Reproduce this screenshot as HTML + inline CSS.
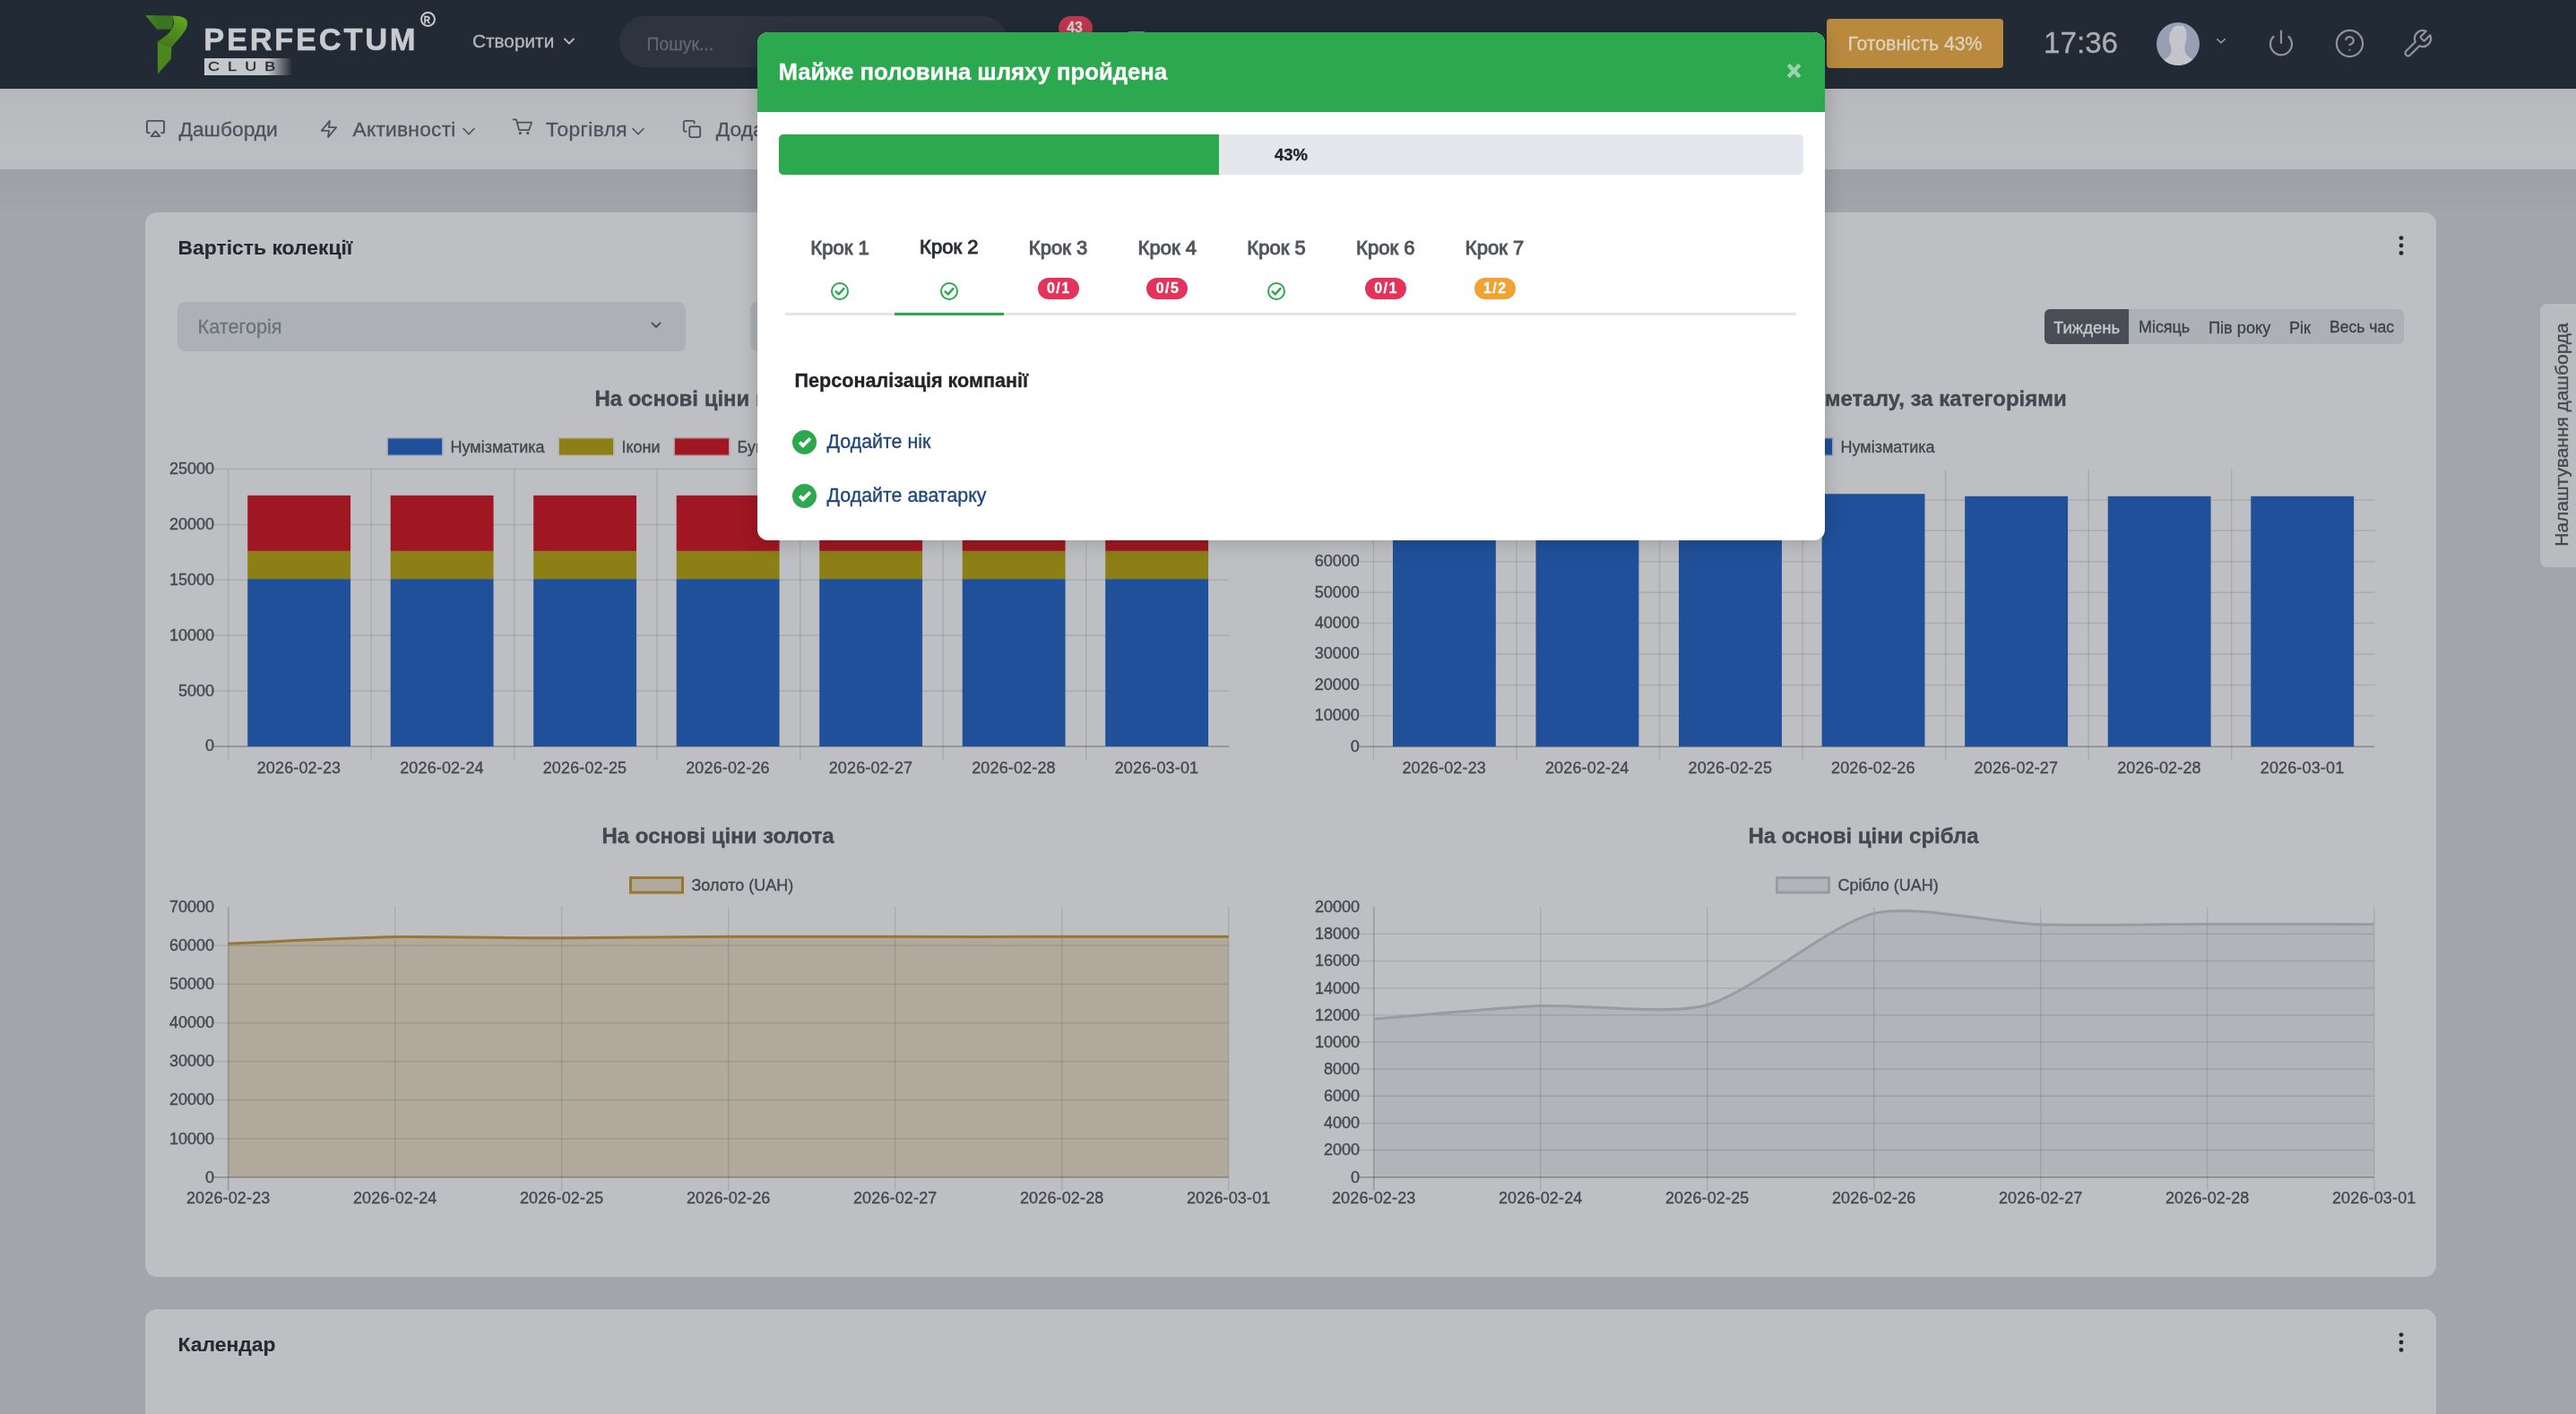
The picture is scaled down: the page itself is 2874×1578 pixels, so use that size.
<!DOCTYPE html>
<html lang="uk">
<head>
<meta charset="utf-8">
<title>Perfectum Club</title>
<style>
*{box-sizing:border-box;margin:0;padding:0}
html,body{width:2874px;height:1578px;overflow:hidden}
body{background:#a2a5aa;font-family:"Liberation Sans",sans-serif;position:relative;color:#44474e}
.abs{position:absolute}
.t{position:absolute;white-space:nowrap;line-height:1;-webkit-text-stroke-width:0.3px}
#header{position:absolute;left:0;top:0;width:2874px;height:99px;background:#222a35}
#nav{position:absolute;left:0;top:99px;width:2874px;height:90px;background:linear-gradient(to bottom,#b7b8bc 0,#bbbcc0 55%,#bcbdc1 100%)}
#navsh{position:absolute;left:0;top:189px;width:2874px;height:48px;background:linear-gradient(to bottom,rgba(0,0,0,0.028),rgba(0,0,0,0))}
.card{position:absolute;left:162px;width:2556px;background:#bebfc3;border-radius:13px}
#card1{top:237px;height:1188px}
#card2{top:1461px;height:200px}
.navt{font-size:22.8px;color:#4d525b}
.ctitle{font-size:22.9px;font-weight:bold;color:#25282d;-webkit-text-stroke-width:0.1px}
svg{position:absolute;overflow:visible}
svg text{font-family:"Liberation Sans",sans-serif;stroke:#44474e;stroke-width:0.35px}
</style>
</head>
<body>
<div id="root" style="position:absolute;left:0;top:0;width:2874px;height:1578px;will-change:transform">
<!-- HEADER -->
<div id="header">

<!-- logo -->
<svg width="80" height="99" viewBox="0 0 80 99" style="left:150px;top:0">
  <defs>
    <linearGradient id="lgA" x1="0" y1="0" x2="1" y2="0"><stop offset="0" stop-color="#4a8a1f"/><stop offset="0.45" stop-color="#3b741e"/><stop offset="1" stop-color="#3d7320"/></linearGradient>
    <linearGradient id="lgB" x1="0.7" y1="0" x2="0.3" y2="1"><stop offset="0" stop-color="#62a51d"/><stop offset="0.5" stop-color="#4e8c1c"/><stop offset="1" stop-color="#457a1e"/></linearGradient>
    <linearGradient id="lgC" x1="0" y1="0" x2="1" y2="1"><stop offset="0" stop-color="#4d8a1d"/><stop offset="1" stop-color="#4a831f"/></linearGradient>
  </defs>
  <path d="M12.1,17.0 L44.6,17.6 L41.4,32.8 L25.1,32.8 Z" fill="url(#lgA)"/>
  <path d="M42.3,18.0 C48.4,17.4 54.7,18.4 57.6,21.5 C60.2,24.7 59.2,30.5 56.0,34.9 C52.2,40.6 46.5,46.4 41.4,52.4 L25.8,46.7 C33.1,41.3 38.2,38.1 41.4,32.8 C43.9,28.6 45.5,22.8 42.3,18.0 Z" fill="url(#lgB)"/>
  <path d="M25.8,46.7 L41.4,52.4 L40.7,66.1 L26.0,82.5 Z" fill="url(#lgC)"/>
</svg>
<div class="t" style="left:227.3px;top:27.2px;font-size:34.5px;font-weight:bold;letter-spacing:2.7px;color:#c9cacd;-webkit-text-stroke:0.5px #c9cacd">PERFECTUM</div>
<div class="abs" style="left:468.5px;top:13.3px;width:17px;height:17px;border:2px solid #c9cacd;border-radius:50%"></div>
<div class="t" style="left:472.7px;top:17.5px;font-size:10px;font-weight:bold;color:#c9cacd">R</div>
<div class="abs" style="left:228px;top:65px;width:98px;height:19px;background:linear-gradient(90deg,#c6c7ca 0,#c6c7ca 72%,rgba(198,199,202,0) 100%)"></div>
<div class="t" style="left:231.5px;top:67.6px;font-size:13.8px;letter-spacing:7px;color:#262d38;transform:scaleX(1.3);transform-origin:0 0;-webkit-text-stroke:0.35px #262d38">CLUB</div>
<div class="t" style="left:527px;top:35.5px;font-size:20.8px;color:#b4b7bd">Створити</div>
<svg width="14" height="10" viewBox="0 0 14 10" style="left:628px;top:41px"><path d="M2,2.5 L7,7.5 L12,2.5" fill="none" stroke="#b4b7bd" stroke-width="2" stroke-linecap="round" stroke-linejoin="round"/></svg>
<div class="abs" style="left:691px;top:18px;width:433px;height:57px;border-radius:29px;background:#2d3440"></div>
<div class="t" style="left:721.5px;top:39.5px;font-size:19.4px;color:#606873">Пошук...</div>
<div class="abs" style="left:1181px;top:17.8px;width:38px;height:27px;border-radius:13.5px;background:#bf3850"></div>
<div class="abs" style="left:1259px;top:34.6px;width:18px;height:2px;border-radius:1px;background:#7d838d"></div>
<div class="t" style="left:1190.3px;top:22.6px;font-size:15.8px;font-weight:bold;color:#dcd0d3">43</div>
<div class="abs" style="left:2038px;top:21px;width:197px;height:55px;border-radius:4px;background:#b98a3e"></div>
<div class="t" style="left:2061.5px;top:38px;font-size:21.2px;color:#ded3c0">Готовність 43%</div>
<div class="t" style="left:2280px;top:30.5px;font-size:33.2px;color:#a9adb4">17:36</div>
<!-- avatar -->
<svg width="48" height="48" viewBox="0 0 48 48" style="left:2406px;top:25px">
  <defs><clipPath id="avc"><circle cx="24" cy="24" r="24"/></clipPath></defs>
  <circle cx="24" cy="24" r="24" fill="#979fb5"/>
  <g clip-path="url(#avc)">
    <path d="M17,9 C18,5 22,3.2 26.5,4 L28.5,3 C32.5,5.5 34,10 33.5,16 C33.6,19.5 33,22 31.8,24 C31.5,27 31.3,29 31.6,31 C32,34 33.5,36.5 36,38.5 C38.5,40.5 41,41.5 43,44 L46,50 L2,50 L5,45 C7.5,42.5 10.5,40.5 13,38.5 C15.5,36.5 16.6,33 16.5,30.5 C16.4,28 15.8,26 15.3,24 C14.2,22 13.8,19 14.2,16.5 C14,13.5 15,11 17,9 Z" fill="#c4c5ca"/>
  </g>
</svg>
<svg width="14" height="10" viewBox="0 0 14 10" style="left:2470.8px;top:41.3px"><path d="M2.8,2.7 L7,6.8 L11.2,2.7" fill="none" stroke="#9a9fa8" stroke-width="1.6" stroke-linecap="round" stroke-linejoin="round"/></svg>
<!-- power -->
<svg width="32" height="32" viewBox="0 0 24 24" style="left:2529px;top:32.4px" fill="none" stroke="#8d939d" stroke-width="1.65" stroke-linecap="round" stroke-linejoin="round"><path d="M18.36 6.64a9 9 0 1 1-12.73 0"/><line x1="12" y1="2" x2="12" y2="12"/></svg>
<!-- help -->
<svg width="35" height="35" viewBox="0 0 24 24" style="left:2603.6px;top:30.8px" fill="none" stroke="#8d939d" stroke-width="1.5" stroke-linecap="round" stroke-linejoin="round"><circle cx="12" cy="12" r="10"/><path d="M9.09 9a3 3 0 0 1 5.83 1c0 2-3 3-3 3"/><line x1="12" y1="17" x2="12.01" y2="17"/></svg>
<!-- wrench -->
<svg width="36" height="36" viewBox="0 0 24 24" style="left:2678.7px;top:31px" fill="none" stroke="#8d939d" stroke-width="1.5" stroke-linecap="round" stroke-linejoin="round"><path d="M14.7 6.3a1 1 0 0 0 0 1.4l1.6 1.6a1 1 0 0 0 1.4 0l3.77-3.77a6 6 0 0 1-7.94 7.94l-6.91 6.91a2.12 2.12 0 0 1-3-3l6.91-6.91a6 6 0 0 1 7.94-7.94l-3.76 3.76z"/></svg>

</div>
<!-- NAV -->
<div id="nav">

<svg width="23" height="23" viewBox="0 0 24 24" style="left:161.5px;top:32.7px" fill="none" stroke="#4d525b" stroke-width="2" stroke-linecap="round" stroke-linejoin="round"><path d="M5 17H4a2 2 0 0 1-2-2V5a2 2 0 0 1 2-2h16a2 2 0 0 1 2 2v10a2 2 0 0 1-2 2h-1"/><polygon points="12 15 17 21 7 21 12 15"/></svg>
<div class="t navt" style="left:199.5px;top:34.1px">Дашборди</div>
<svg width="22" height="22" viewBox="0 0 24 24" style="left:356px;top:33.7px" fill="none" stroke="#4d525b" stroke-width="2" stroke-linecap="round" stroke-linejoin="round"><polygon points="13 2 3 14 12 14 11 22 21 10 12 10 13 2"/></svg>
<div class="t navt" style="left:393.5px;top:34.1px;letter-spacing:0.22px">Активності</div>
<svg width="16" height="10" viewBox="0 0 16 10" style="left:514.5px;top:42.7px"><path d="M2,1.5 L8,7.8 L14,1.5" fill="none" stroke="#4d525b" stroke-width="1.6" stroke-linecap="round" stroke-linejoin="round"/></svg>
<svg width="24" height="22" viewBox="0 0 24 22" style="left:571px;top:31.7px" fill="none" stroke="#4d525b" stroke-width="1.7" stroke-linecap="round" stroke-linejoin="round"><path d="M1.5 2.3h3.4l3.3 11.9h10.9l3-8.6H6.4"/><circle cx="9.4" cy="17.6" r="0.8" fill="#4d525b"/><circle cx="17.8" cy="17.6" r="0.8" fill="#4d525b"/></svg>
<div class="t navt" style="left:609px;top:34.1px;letter-spacing:0.37px">Торгівля</div>
<svg width="16" height="10" viewBox="0 0 16 10" style="left:703.5px;top:42.7px"><path d="M2,1.5 L8,7.8 L14,1.5" fill="none" stroke="#4d525b" stroke-width="1.6" stroke-linecap="round" stroke-linejoin="round"/></svg>
<svg width="22" height="22" viewBox="0 0 24 24" style="left:761px;top:34.2px" fill="none" stroke="#4d525b" stroke-width="2" stroke-linecap="round" stroke-linejoin="round"><rect x="9" y="9" width="13" height="13" rx="2" ry="2"/><path d="M5 15H4a2 2 0 0 1-2-2V4a2 2 0 0 1 2-2h9a2 2 0 0 1 2 2v1"/></svg>
<div class="t navt" style="left:798.8px;top:34.1px">Додатки</div>

</div>
<div id="navsh"></div>
<!-- CARDS -->
<div class="card" id="card1"></div>
<div class="card" id="card2"></div>

<div class="t ctitle" style="left:198.5px;top:265px">Вартість колекції</div>
<div class="t ctitle" style="left:198.5px;top:1488.7px">Календар</div>
<svg width="8" height="24" viewBox="0 0 8 24" style="left:2674.5px;top:261.5px"><circle cx="4" cy="3.6" r="2.45" fill="#25282d"/><circle cx="4" cy="12" r="2.45" fill="#25282d"/><circle cx="4" cy="20.4" r="2.45" fill="#25282d"/></svg>
<svg width="8" height="24" viewBox="0 0 8 24" style="left:2674.5px;top:1485.5px"><circle cx="4" cy="3.6" r="2.45" fill="#25282d"/><circle cx="4" cy="12" r="2.45" fill="#25282d"/><circle cx="4" cy="20.4" r="2.45" fill="#25282d"/></svg>
<div class="abs" style="left:198px;top:337px;width:567px;height:55px;border-radius:8px;background:#adb1b6"></div>
<div class="t" style="left:220.5px;top:353.5px;font-size:21.7px;color:#6d7279">Категорія</div>
<svg width="14" height="10" viewBox="0 0 14 10" style="left:724.5px;top:358px"><path d="M2.5,2.5 L7,7 L11.5,2.5" fill="none" stroke="#4d525b" stroke-width="2" stroke-linecap="round" stroke-linejoin="round"/></svg>
<div class="abs" style="left:837px;top:337px;width:567px;height:55px;border-radius:8px;background:#adb1b6"></div>
<div class="abs" style="left:2281px;top:345px;width:401px;height:39px;border-radius:6px;background:#adb1b6"></div>
<div class="abs" style="left:2281px;top:345px;width:94px;height:39px;border-radius:6px 0 0 6px;background:#484d56"></div>
<div class="t" style="left:2291px;top:357px;font-size:18.5px;color:#c6c9ce">Тиждень</div>
<div class="t" style="left:2386px;top:357px;font-size:17.9px;color:#3b3f47">Місяць</div>
<div class="t" style="left:2464px;top:357px;font-size:18.2px;color:#3b3f47">Пів року</div>
<div class="t" style="left:2554px;top:357px;font-size:18.1px;color:#3b3f47">Рік</div>
<div class="t" style="left:2599px;top:357px;font-size:17.6px;color:#3b3f47">Весь час</div>

<svg id="charts" width="2874" height="1578" viewBox="0 0 2874 1578" style="left:0;top:0">
<text x="663.40" y="453.00" font-size="24" text-anchor="start" font-weight="bold" fill="#44474e">На основі ціни металу</text>
<rect x="433.00" y="489.50" width="60" height="18" fill="#205099" stroke="#205099" stroke-opacity="0.22" stroke-width="3"/>
<text x="502.50" y="505.00" font-size="18" text-anchor="start" font-weight="normal" fill="#44474e">Нумізматика</text>
<rect x="624.00" y="489.50" width="60" height="18" fill="#8b7f16" stroke="#8b7f16" stroke-opacity="0.22" stroke-width="3"/>
<text x="693.50" y="505.00" font-size="18" text-anchor="start" font-weight="normal" fill="#44474e">Ікони</text>
<rect x="753.00" y="489.50" width="60" height="18" fill="#a01623" stroke="#a01623" stroke-opacity="0.22" stroke-width="3"/>
<text x="822.50" y="505.00" font-size="18" text-anchor="start" font-weight="normal" fill="#44474e">Букіністика</text>
<line x1="238.20" y1="833.00" x2="1371.20" y2="833.00" stroke="rgba(0,0,0,0.28)" stroke-width="1.5"/>
<text x="239.10" y="838.40" font-size="18" text-anchor="end" font-weight="normal" fill="#44474e">0</text>
<line x1="238.20" y1="771.10" x2="1371.20" y2="771.10" stroke="rgba(0,0,0,0.10)" stroke-width="1.5"/>
<text x="239.10" y="776.50" font-size="18" text-anchor="end" font-weight="normal" fill="#44474e">5000</text>
<line x1="238.20" y1="709.20" x2="1371.20" y2="709.20" stroke="rgba(0,0,0,0.10)" stroke-width="1.5"/>
<text x="239.10" y="714.60" font-size="18" text-anchor="end" font-weight="normal" fill="#44474e">10000</text>
<line x1="238.20" y1="647.30" x2="1371.20" y2="647.30" stroke="rgba(0,0,0,0.10)" stroke-width="1.5"/>
<text x="239.10" y="652.70" font-size="18" text-anchor="end" font-weight="normal" fill="#44474e">15000</text>
<line x1="238.20" y1="585.40" x2="1371.20" y2="585.40" stroke="rgba(0,0,0,0.10)" stroke-width="1.5"/>
<text x="239.10" y="590.80" font-size="18" text-anchor="end" font-weight="normal" fill="#44474e">20000</text>
<line x1="238.20" y1="523.50" x2="1371.20" y2="523.50" stroke="rgba(0,0,0,0.10)" stroke-width="1.5"/>
<text x="239.10" y="528.90" font-size="18" text-anchor="end" font-weight="normal" fill="#44474e">25000</text>
<line x1="254.70" y1="523.50" x2="254.70" y2="848.00" stroke="rgba(0,0,0,0.10)" stroke-width="1.5"/>
<line x1="414.20" y1="523.50" x2="414.20" y2="848.00" stroke="rgba(0,0,0,0.10)" stroke-width="1.5"/>
<line x1="573.70" y1="523.50" x2="573.70" y2="848.00" stroke="rgba(0,0,0,0.10)" stroke-width="1.5"/>
<line x1="733.20" y1="523.50" x2="733.20" y2="848.00" stroke="rgba(0,0,0,0.10)" stroke-width="1.5"/>
<line x1="892.70" y1="523.50" x2="892.70" y2="848.00" stroke="rgba(0,0,0,0.10)" stroke-width="1.5"/>
<line x1="1052.20" y1="523.50" x2="1052.20" y2="848.00" stroke="rgba(0,0,0,0.10)" stroke-width="1.5"/>
<line x1="1211.70" y1="523.50" x2="1211.70" y2="848.00" stroke="rgba(0,0,0,0.10)" stroke-width="1.5"/>
<rect x="276.23" y="646.10" width="114.84" height="186.90" fill="#205099" />
<rect x="276.23" y="614.90" width="114.84" height="31.20" fill="#8b7f16" />
<rect x="276.23" y="552.90" width="114.84" height="62.00" fill="#a01623" />
<text x="333.45" y="862.50" font-size="18" text-anchor="middle" font-weight="normal" fill="#44474e" letter-spacing="0.15">2026-02-23</text>
<rect x="435.73" y="646.10" width="114.84" height="186.90" fill="#205099" />
<rect x="435.73" y="614.90" width="114.84" height="31.20" fill="#8b7f16" />
<rect x="435.73" y="552.90" width="114.84" height="62.00" fill="#a01623" />
<text x="492.95" y="862.50" font-size="18" text-anchor="middle" font-weight="normal" fill="#44474e" letter-spacing="0.15">2026-02-24</text>
<rect x="595.23" y="646.10" width="114.84" height="186.90" fill="#205099" />
<rect x="595.23" y="614.90" width="114.84" height="31.20" fill="#8b7f16" />
<rect x="595.23" y="552.90" width="114.84" height="62.00" fill="#a01623" />
<text x="652.45" y="862.50" font-size="18" text-anchor="middle" font-weight="normal" fill="#44474e" letter-spacing="0.15">2026-02-25</text>
<rect x="754.73" y="646.10" width="114.84" height="186.90" fill="#205099" />
<rect x="754.73" y="614.90" width="114.84" height="31.20" fill="#8b7f16" />
<rect x="754.73" y="552.90" width="114.84" height="62.00" fill="#a01623" />
<text x="811.95" y="862.50" font-size="18" text-anchor="middle" font-weight="normal" fill="#44474e" letter-spacing="0.15">2026-02-26</text>
<rect x="914.23" y="646.10" width="114.84" height="186.90" fill="#205099" />
<rect x="914.23" y="614.90" width="114.84" height="31.20" fill="#8b7f16" />
<rect x="914.23" y="552.90" width="114.84" height="62.00" fill="#a01623" />
<text x="971.45" y="862.50" font-size="18" text-anchor="middle" font-weight="normal" fill="#44474e" letter-spacing="0.15">2026-02-27</text>
<rect x="1073.73" y="646.10" width="114.84" height="186.90" fill="#205099" />
<rect x="1073.73" y="614.90" width="114.84" height="31.20" fill="#8b7f16" />
<rect x="1073.73" y="552.90" width="114.84" height="62.00" fill="#a01623" />
<text x="1130.95" y="862.50" font-size="18" text-anchor="middle" font-weight="normal" fill="#44474e" letter-spacing="0.15">2026-02-28</text>
<rect x="1233.23" y="646.10" width="114.84" height="186.90" fill="#205099" />
<rect x="1233.23" y="614.90" width="114.84" height="31.20" fill="#8b7f16" />
<rect x="1233.23" y="552.90" width="114.84" height="62.00" fill="#a01623" />
<text x="1290.45" y="862.50" font-size="18" text-anchor="middle" font-weight="normal" fill="#44474e" letter-spacing="0.15">2026-03-01</text>
<text x="2305.80" y="453.00" font-size="24" text-anchor="end" font-weight="bold" fill="#44474e">На основі ціни металу, за категоріями</text>
<rect x="1984.00" y="489.50" width="60" height="18" fill="#205099" stroke="#205099" stroke-opacity="0.22" stroke-width="3"/>
<text x="2053.50" y="505.00" font-size="18" text-anchor="start" font-weight="normal" fill="#44474e">Нумізматика</text>
<line x1="1515.90" y1="833.20" x2="2649.30" y2="833.20" stroke="rgba(0,0,0,0.28)" stroke-width="1.5"/>
<text x="1516.80" y="838.60" font-size="18" text-anchor="end" font-weight="normal" fill="#44474e">0</text>
<line x1="1515.90" y1="798.79" x2="2649.30" y2="798.79" stroke="rgba(0,0,0,0.10)" stroke-width="1.5"/>
<text x="1516.80" y="804.19" font-size="18" text-anchor="end" font-weight="normal" fill="#44474e">10000</text>
<line x1="1515.90" y1="764.38" x2="2649.30" y2="764.38" stroke="rgba(0,0,0,0.10)" stroke-width="1.5"/>
<text x="1516.80" y="769.78" font-size="18" text-anchor="end" font-weight="normal" fill="#44474e">20000</text>
<line x1="1515.90" y1="729.97" x2="2649.30" y2="729.97" stroke="rgba(0,0,0,0.10)" stroke-width="1.5"/>
<text x="1516.80" y="735.37" font-size="18" text-anchor="end" font-weight="normal" fill="#44474e">30000</text>
<line x1="1515.90" y1="695.56" x2="2649.30" y2="695.56" stroke="rgba(0,0,0,0.10)" stroke-width="1.5"/>
<text x="1516.80" y="700.96" font-size="18" text-anchor="end" font-weight="normal" fill="#44474e">40000</text>
<line x1="1515.90" y1="661.14" x2="2649.30" y2="661.14" stroke="rgba(0,0,0,0.10)" stroke-width="1.5"/>
<text x="1516.80" y="666.54" font-size="18" text-anchor="end" font-weight="normal" fill="#44474e">50000</text>
<line x1="1515.90" y1="626.73" x2="2649.30" y2="626.73" stroke="rgba(0,0,0,0.10)" stroke-width="1.5"/>
<text x="1516.80" y="632.13" font-size="18" text-anchor="end" font-weight="normal" fill="#44474e">60000</text>
<line x1="1515.90" y1="592.32" x2="2649.30" y2="592.32" stroke="rgba(0,0,0,0.10)" stroke-width="1.5"/>
<text x="1516.80" y="597.72" font-size="18" text-anchor="end" font-weight="normal" fill="#44474e">70000</text>
<line x1="1515.90" y1="557.91" x2="2649.30" y2="557.91" stroke="rgba(0,0,0,0.10)" stroke-width="1.5"/>
<text x="1516.80" y="563.31" font-size="18" text-anchor="end" font-weight="normal" fill="#44474e">80000</text>
<text x="1516.80" y="528.90" font-size="18" text-anchor="end" font-weight="normal" fill="#44474e">90000</text>
<line x1="1532.40" y1="523.50" x2="1532.40" y2="848.20" stroke="rgba(0,0,0,0.10)" stroke-width="1.5"/>
<line x1="1691.96" y1="523.50" x2="1691.96" y2="848.20" stroke="rgba(0,0,0,0.10)" stroke-width="1.5"/>
<line x1="1851.51" y1="523.50" x2="1851.51" y2="848.20" stroke="rgba(0,0,0,0.10)" stroke-width="1.5"/>
<line x1="2011.07" y1="523.50" x2="2011.07" y2="848.20" stroke="rgba(0,0,0,0.10)" stroke-width="1.5"/>
<line x1="2170.63" y1="523.50" x2="2170.63" y2="848.20" stroke="rgba(0,0,0,0.10)" stroke-width="1.5"/>
<line x1="2330.19" y1="523.50" x2="2330.19" y2="848.20" stroke="rgba(0,0,0,0.10)" stroke-width="1.5"/>
<line x1="2489.74" y1="523.50" x2="2489.74" y2="848.20" stroke="rgba(0,0,0,0.10)" stroke-width="1.5"/>
<rect x="1553.94" y="553.44" width="114.88" height="279.76" fill="#205099" />
<text x="1611.18" y="862.70" font-size="18" text-anchor="middle" font-weight="normal" fill="#44474e" letter-spacing="0.15">2026-02-23</text>
<rect x="1713.50" y="553.44" width="114.88" height="279.76" fill="#205099" />
<text x="1770.74" y="862.70" font-size="18" text-anchor="middle" font-weight="normal" fill="#44474e" letter-spacing="0.15">2026-02-24</text>
<rect x="1873.05" y="553.44" width="114.88" height="279.76" fill="#205099" />
<text x="1930.29" y="862.70" font-size="18" text-anchor="middle" font-weight="normal" fill="#44474e" letter-spacing="0.15">2026-02-25</text>
<rect x="2032.61" y="551.20" width="114.88" height="282.00" fill="#205099" />
<text x="2089.85" y="862.70" font-size="18" text-anchor="middle" font-weight="normal" fill="#44474e" letter-spacing="0.15">2026-02-26</text>
<rect x="2192.17" y="553.78" width="114.88" height="279.42" fill="#205099" />
<text x="2249.41" y="862.70" font-size="18" text-anchor="middle" font-weight="normal" fill="#44474e" letter-spacing="0.15">2026-02-27</text>
<rect x="2351.72" y="553.78" width="114.88" height="279.42" fill="#205099" />
<text x="2408.96" y="862.70" font-size="18" text-anchor="middle" font-weight="normal" fill="#44474e" letter-spacing="0.15">2026-02-28</text>
<rect x="2511.28" y="553.78" width="114.88" height="279.42" fill="#205099" />
<text x="2568.52" y="862.70" font-size="18" text-anchor="middle" font-weight="normal" fill="#44474e" letter-spacing="0.15">2026-03-01</text>
<text x="801.00" y="941.40" font-size="24" text-anchor="middle" font-weight="bold" fill="#44474e">На основі ціни золота</text>
<rect x="703.50" y="979.50" width="58" height="16.5" fill="#b1aa9c" stroke="#977732" stroke-width="3"/>
<text x="771.50" y="994.00" font-size="18" text-anchor="start" font-weight="normal" fill="#44474e">Золото (UAH)</text>
<path d="M254.70,1052.93 C301.20,1051.08 394.18,1046.29 440.70,1045.53 C487.18,1044.77 580.20,1046.92 626.70,1046.87 C673.20,1046.83 766.20,1045.34 812.70,1045.15 C859.20,1044.96 952.20,1045.34 998.70,1045.37 C1045.20,1045.39 1138.20,1045.37 1184.70,1045.37 C1231.20,1045.37 1324.20,1045.37 1370.70,1045.37 L1370.70,1313.70 L254.70,1313.70 Z" fill="#b1aa9c"/>
<line x1="238.20" y1="1313.70" x2="1370.70" y2="1313.70" stroke="rgba(0,0,0,0.28)" stroke-width="1.5"/>
<text x="239.10" y="1319.60" font-size="18" text-anchor="end" font-weight="normal" fill="#44474e">0</text>
<line x1="238.20" y1="1270.63" x2="1370.70" y2="1270.63" stroke="rgba(0,0,0,0.10)" stroke-width="1.5"/>
<text x="239.10" y="1276.53" font-size="18" text-anchor="end" font-weight="normal" fill="#44474e">10000</text>
<line x1="238.20" y1="1227.56" x2="1370.70" y2="1227.56" stroke="rgba(0,0,0,0.10)" stroke-width="1.5"/>
<text x="239.10" y="1233.46" font-size="18" text-anchor="end" font-weight="normal" fill="#44474e">20000</text>
<line x1="238.20" y1="1184.49" x2="1370.70" y2="1184.49" stroke="rgba(0,0,0,0.10)" stroke-width="1.5"/>
<text x="239.10" y="1190.39" font-size="18" text-anchor="end" font-weight="normal" fill="#44474e">30000</text>
<line x1="238.20" y1="1141.41" x2="1370.70" y2="1141.41" stroke="rgba(0,0,0,0.10)" stroke-width="1.5"/>
<text x="239.10" y="1147.31" font-size="18" text-anchor="end" font-weight="normal" fill="#44474e">40000</text>
<line x1="238.20" y1="1098.34" x2="1370.70" y2="1098.34" stroke="rgba(0,0,0,0.10)" stroke-width="1.5"/>
<text x="239.10" y="1104.24" font-size="18" text-anchor="end" font-weight="normal" fill="#44474e">50000</text>
<line x1="238.20" y1="1055.27" x2="1370.70" y2="1055.27" stroke="rgba(0,0,0,0.10)" stroke-width="1.5"/>
<text x="239.10" y="1061.17" font-size="18" text-anchor="end" font-weight="normal" fill="#44474e">60000</text>
<text x="239.10" y="1018.10" font-size="18" text-anchor="end" font-weight="normal" fill="#44474e">70000</text>
<line x1="254.70" y1="1012.20" x2="254.70" y2="1328.70" stroke="rgba(0,0,0,0.2)" stroke-width="1.5"/>
<line x1="440.70" y1="1012.20" x2="440.70" y2="1328.70" stroke="rgba(0,0,0,0.10)" stroke-width="1.5"/>
<line x1="626.70" y1="1012.20" x2="626.70" y2="1328.70" stroke="rgba(0,0,0,0.10)" stroke-width="1.5"/>
<line x1="812.70" y1="1012.20" x2="812.70" y2="1328.70" stroke="rgba(0,0,0,0.10)" stroke-width="1.5"/>
<line x1="998.70" y1="1012.20" x2="998.70" y2="1328.70" stroke="rgba(0,0,0,0.10)" stroke-width="1.5"/>
<line x1="1184.70" y1="1012.20" x2="1184.70" y2="1328.70" stroke="rgba(0,0,0,0.10)" stroke-width="1.5"/>
<line x1="1370.70" y1="1012.20" x2="1370.70" y2="1328.70" stroke="rgba(0,0,0,0.10)" stroke-width="1.5"/>
<path d="M254.70,1052.93 C301.20,1051.08 394.18,1046.29 440.70,1045.53 C487.18,1044.77 580.20,1046.92 626.70,1046.87 C673.20,1046.83 766.20,1045.34 812.70,1045.15 C859.20,1044.96 952.20,1045.34 998.70,1045.37 C1045.20,1045.39 1138.20,1045.37 1184.70,1045.37 C1231.20,1045.37 1324.20,1045.37 1370.70,1045.37" fill="none" stroke="#977732" stroke-width="3" stroke-linejoin="round"/>
<text x="254.70" y="1343.20" font-size="18" text-anchor="middle" font-weight="normal" fill="#44474e" letter-spacing="0.15">2026-02-23</text>
<text x="440.70" y="1343.20" font-size="18" text-anchor="middle" font-weight="normal" fill="#44474e" letter-spacing="0.15">2026-02-24</text>
<text x="626.70" y="1343.20" font-size="18" text-anchor="middle" font-weight="normal" fill="#44474e" letter-spacing="0.15">2026-02-25</text>
<text x="812.70" y="1343.20" font-size="18" text-anchor="middle" font-weight="normal" fill="#44474e" letter-spacing="0.15">2026-02-26</text>
<text x="998.70" y="1343.20" font-size="18" text-anchor="middle" font-weight="normal" fill="#44474e" letter-spacing="0.15">2026-02-27</text>
<text x="1184.70" y="1343.20" font-size="18" text-anchor="middle" font-weight="normal" fill="#44474e" letter-spacing="0.15">2026-02-28</text>
<text x="1370.70" y="1343.20" font-size="18" text-anchor="middle" font-weight="normal" fill="#44474e" letter-spacing="0.15">2026-03-01</text>
<text x="2079.00" y="941.40" font-size="24" text-anchor="middle" font-weight="bold" fill="#44474e">На основі ціни срібла</text>
<rect x="1982.50" y="979.50" width="58" height="16.5" fill="#b2b4b9" stroke="#989ba1" stroke-width="3"/>
<text x="2050.50" y="994.00" font-size="18" text-anchor="start" font-weight="normal" fill="#44474e">Срібло (UAH)</text>
<path d="M1532.70,1137.14 C1579.20,1133.49 1672.13,1124.51 1718.70,1122.55 C1765.13,1120.60 1861.26,1133.54 1904.70,1121.49 C1954.26,1107.75 2041.19,1031.30 2090.70,1019.36 C2134.19,1008.87 2230.15,1030.32 2276.70,1031.80 C2323.15,1033.28 2416.20,1031.23 2462.70,1031.19 C2509.20,1031.16 2602.20,1031.42 2648.70,1031.50 L2648.70,1313.70 L1532.70,1313.70 Z" fill="#b2b4b9"/>
<line x1="1516.20" y1="1313.70" x2="2648.70" y2="1313.70" stroke="rgba(0,0,0,0.28)" stroke-width="1.5"/>
<text x="1517.10" y="1319.60" font-size="18" text-anchor="end" font-weight="normal" fill="#44474e">0</text>
<line x1="1516.20" y1="1283.55" x2="2648.70" y2="1283.55" stroke="rgba(0,0,0,0.10)" stroke-width="1.5"/>
<text x="1517.10" y="1289.45" font-size="18" text-anchor="end" font-weight="normal" fill="#44474e">2000</text>
<line x1="1516.20" y1="1253.40" x2="2648.70" y2="1253.40" stroke="rgba(0,0,0,0.10)" stroke-width="1.5"/>
<text x="1517.10" y="1259.30" font-size="18" text-anchor="end" font-weight="normal" fill="#44474e">4000</text>
<line x1="1516.20" y1="1223.25" x2="2648.70" y2="1223.25" stroke="rgba(0,0,0,0.10)" stroke-width="1.5"/>
<text x="1517.10" y="1229.15" font-size="18" text-anchor="end" font-weight="normal" fill="#44474e">6000</text>
<line x1="1516.20" y1="1193.10" x2="2648.70" y2="1193.10" stroke="rgba(0,0,0,0.10)" stroke-width="1.5"/>
<text x="1517.10" y="1199.00" font-size="18" text-anchor="end" font-weight="normal" fill="#44474e">8000</text>
<line x1="1516.20" y1="1162.95" x2="2648.70" y2="1162.95" stroke="rgba(0,0,0,0.10)" stroke-width="1.5"/>
<text x="1517.10" y="1168.85" font-size="18" text-anchor="end" font-weight="normal" fill="#44474e">10000</text>
<line x1="1516.20" y1="1132.80" x2="2648.70" y2="1132.80" stroke="rgba(0,0,0,0.10)" stroke-width="1.5"/>
<text x="1517.10" y="1138.70" font-size="18" text-anchor="end" font-weight="normal" fill="#44474e">12000</text>
<line x1="1516.20" y1="1102.65" x2="2648.70" y2="1102.65" stroke="rgba(0,0,0,0.10)" stroke-width="1.5"/>
<text x="1517.10" y="1108.55" font-size="18" text-anchor="end" font-weight="normal" fill="#44474e">14000</text>
<line x1="1516.20" y1="1072.50" x2="2648.70" y2="1072.50" stroke="rgba(0,0,0,0.10)" stroke-width="1.5"/>
<text x="1517.10" y="1078.40" font-size="18" text-anchor="end" font-weight="normal" fill="#44474e">16000</text>
<line x1="1516.20" y1="1042.35" x2="2648.70" y2="1042.35" stroke="rgba(0,0,0,0.10)" stroke-width="1.5"/>
<text x="1517.10" y="1048.25" font-size="18" text-anchor="end" font-weight="normal" fill="#44474e">18000</text>
<text x="1517.10" y="1018.10" font-size="18" text-anchor="end" font-weight="normal" fill="#44474e">20000</text>
<line x1="1532.70" y1="1012.20" x2="1532.70" y2="1328.70" stroke="rgba(0,0,0,0.2)" stroke-width="1.5"/>
<line x1="1718.70" y1="1012.20" x2="1718.70" y2="1328.70" stroke="rgba(0,0,0,0.10)" stroke-width="1.5"/>
<line x1="1904.70" y1="1012.20" x2="1904.70" y2="1328.70" stroke="rgba(0,0,0,0.10)" stroke-width="1.5"/>
<line x1="2090.70" y1="1012.20" x2="2090.70" y2="1328.70" stroke="rgba(0,0,0,0.10)" stroke-width="1.5"/>
<line x1="2276.70" y1="1012.20" x2="2276.70" y2="1328.70" stroke="rgba(0,0,0,0.10)" stroke-width="1.5"/>
<line x1="2462.70" y1="1012.20" x2="2462.70" y2="1328.70" stroke="rgba(0,0,0,0.10)" stroke-width="1.5"/>
<line x1="2648.70" y1="1012.20" x2="2648.70" y2="1328.70" stroke="rgba(0,0,0,0.10)" stroke-width="1.5"/>
<path d="M1532.70,1137.14 C1579.20,1133.49 1672.13,1124.51 1718.70,1122.55 C1765.13,1120.60 1861.26,1133.54 1904.70,1121.49 C1954.26,1107.75 2041.19,1031.30 2090.70,1019.36 C2134.19,1008.87 2230.15,1030.32 2276.70,1031.80 C2323.15,1033.28 2416.20,1031.23 2462.70,1031.19 C2509.20,1031.16 2602.20,1031.42 2648.70,1031.50" fill="none" stroke="#989ba1" stroke-width="3" stroke-linejoin="round"/>
<text x="1532.70" y="1343.20" font-size="18" text-anchor="middle" font-weight="normal" fill="#44474e" letter-spacing="0.15">2026-02-23</text>
<text x="1718.70" y="1343.20" font-size="18" text-anchor="middle" font-weight="normal" fill="#44474e" letter-spacing="0.15">2026-02-24</text>
<text x="1904.70" y="1343.20" font-size="18" text-anchor="middle" font-weight="normal" fill="#44474e" letter-spacing="0.15">2026-02-25</text>
<text x="2090.70" y="1343.20" font-size="18" text-anchor="middle" font-weight="normal" fill="#44474e" letter-spacing="0.15">2026-02-26</text>
<text x="2276.70" y="1343.20" font-size="18" text-anchor="middle" font-weight="normal" fill="#44474e" letter-spacing="0.15">2026-02-27</text>
<text x="2462.70" y="1343.20" font-size="18" text-anchor="middle" font-weight="normal" fill="#44474e" letter-spacing="0.15">2026-02-28</text>
<text x="2648.70" y="1343.20" font-size="18" text-anchor="middle" font-weight="normal" fill="#44474e" letter-spacing="0.15">2026-03-01</text>
</svg>

<div class="abs" style="left:2834px;top:339px;width:46px;height:294px;border-radius:8px 0 0 8px;background:#babbbf"></div>
<div class="t" style="left:2857.5px;top:485px;font-size:20.9px;color:#44474e;transform:translate(-50%,-50%) rotate(-90deg)">Налаштування дашборда</div>


<div class="abs" id="modal" style="left:845px;top:36px;width:1191px;height:567px;border-radius:12px;background:#fff;box-shadow:0 2px 22px rgba(0,0,0,0.19)"></div>
<div class="abs" style="left:845px;top:36px;width:1191px;height:89px;border-radius:12px 12px 0 0;background:#2ca84f"></div>
<div class="t" style="left:868.5px;top:67.5px;font-size:25.7px;font-weight:bold;color:#fff">Майже половина шляху пройдена</div>
<svg width="20" height="20" viewBox="0 0 20 20" style="left:1991.2px;top:69px"><path d="M4.2,3.2 L16.8,16.8 M16.8,3.2 L4.2,16.8" stroke="#97d4a8" stroke-width="4.4" fill="none"/></svg>
<div class="abs" style="left:869px;top:150px;width:1143px;height:45px;border-radius:5px;background:#e4e7ec"></div>
<div class="abs" style="left:869px;top:150px;width:491px;height:45px;border-radius:5px 0 0 5px;background:#2ca84f"></div>
<div class="t" style="left:1440.5px;top:163.6px;transform:translateX(-50%);font-size:18.5px;font-weight:bold;color:#212529">43%</div>
<div class="abs" style="left:876px;top:349px;width:1128px;height:3px;background:#e3e5e9"></div>
<div class="abs" style="left:998px;top:349px;width:122px;height:3px;background:#2ca84f"></div>
<div class="t" style="left:937.0px;top:266.1px;transform:translateX(-50%);font-size:22px;-webkit-text-stroke-width:0.95px;color:#50555d">Крок 1</div>
<svg width="24" height="24" viewBox="0 0 24 24" style="left:925.0px;top:312.8px" fill="none" stroke="#2ca84f" stroke-width="2" stroke-linecap="round" stroke-linejoin="round"><circle cx="12" cy="12" r="9"/><path d="M7.6,12.4 L10.8,15.4 L16.4,9.2" stroke-width="2.5"/></svg>
<div class="t" style="left:1058.75px;top:265.2px;transform:translateX(-50%);font-size:22px;-webkit-text-stroke-width:0.95px;color:#2b2f36">Крок 2</div>
<svg width="24" height="24" viewBox="0 0 24 24" style="left:1046.75px;top:312.8px" fill="none" stroke="#2ca84f" stroke-width="2" stroke-linecap="round" stroke-linejoin="round"><circle cx="12" cy="12" r="9"/><path d="M7.6,12.4 L10.8,15.4 L16.4,9.2" stroke-width="2.5"/></svg>
<div class="t" style="left:1180.5px;top:266.1px;transform:translateX(-50%);font-size:22px;-webkit-text-stroke-width:0.95px;color:#50555d">Крок 3</div>
<div class="abs" style="left:1157.5px;top:310.3px;width:46px;height:23.4px;border-radius:12px;background:#e4335a"></div>
<div class="t" style="left:1181.3px;top:313.7px;transform:translateX(-50%);font-size:16px;font-weight:bold;letter-spacing:1.5px;color:#fff">0/1</div>
<div class="t" style="left:1302.25px;top:266.1px;transform:translateX(-50%);font-size:22px;-webkit-text-stroke-width:0.95px;color:#50555d">Крок 4</div>
<div class="abs" style="left:1279.25px;top:310.3px;width:46px;height:23.4px;border-radius:12px;background:#e4335a"></div>
<div class="t" style="left:1303.05px;top:313.7px;transform:translateX(-50%);font-size:16px;font-weight:bold;letter-spacing:1.5px;color:#fff">0/5</div>
<div class="t" style="left:1424.0px;top:266.1px;transform:translateX(-50%);font-size:22px;-webkit-text-stroke-width:0.95px;color:#50555d">Крок 5</div>
<svg width="24" height="24" viewBox="0 0 24 24" style="left:1412.0px;top:312.8px" fill="none" stroke="#2ca84f" stroke-width="2" stroke-linecap="round" stroke-linejoin="round"><circle cx="12" cy="12" r="9"/><path d="M7.6,12.4 L10.8,15.4 L16.4,9.2" stroke-width="2.5"/></svg>
<div class="t" style="left:1545.75px;top:266.1px;transform:translateX(-50%);font-size:22px;-webkit-text-stroke-width:0.95px;color:#50555d">Крок 6</div>
<div class="abs" style="left:1522.75px;top:310.3px;width:46px;height:23.4px;border-radius:12px;background:#e4335a"></div>
<div class="t" style="left:1546.55px;top:313.7px;transform:translateX(-50%);font-size:16px;font-weight:bold;letter-spacing:1.5px;color:#fff">0/1</div>
<div class="t" style="left:1667.5px;top:266.1px;transform:translateX(-50%);font-size:22px;-webkit-text-stroke-width:0.95px;color:#50555d">Крок 7</div>
<div class="abs" style="left:1644.5px;top:310.3px;width:46px;height:23.4px;border-radius:12px;background:#f0a233"></div>
<div class="t" style="left:1668.3px;top:313.7px;transform:translateX(-50%);font-size:16px;font-weight:bold;letter-spacing:1.5px;color:#fff">1/2</div>

<div class="t" style="left:886.5px;top:413.7px;font-size:21.6px;font-weight:bold;color:#212529">Персоналізація компанії</div>
<svg width="27" height="27" viewBox="0 0 27 27" style="left:883.9px;top:479.8px"><circle cx="13.5" cy="13.5" r="13.5" fill="#2ca84f"/><path d="M8.1,13.5 L11.9,17.3 L20,9.2" fill="none" stroke="#fff" stroke-width="3.7" stroke-linecap="butt" stroke-linejoin="miter"/></svg>
<div class="t" style="left:922.5px;top:482.7px;font-size:21.4px;color:#1d4578">Додайте нік</div>

<svg width="27" height="27" viewBox="0 0 27 27" style="left:883.9px;top:539.8px"><circle cx="13.5" cy="13.5" r="13.5" fill="#2ca84f"/><path d="M8.1,13.5 L11.9,17.3 L20,9.2" fill="none" stroke="#fff" stroke-width="3.7" stroke-linecap="butt" stroke-linejoin="miter"/></svg>
<div class="t" style="left:922.5px;top:542.6999999999999px;font-size:21.4px;color:#1d4578">Додайте аватарку</div>


</div>
</body>
</html>
